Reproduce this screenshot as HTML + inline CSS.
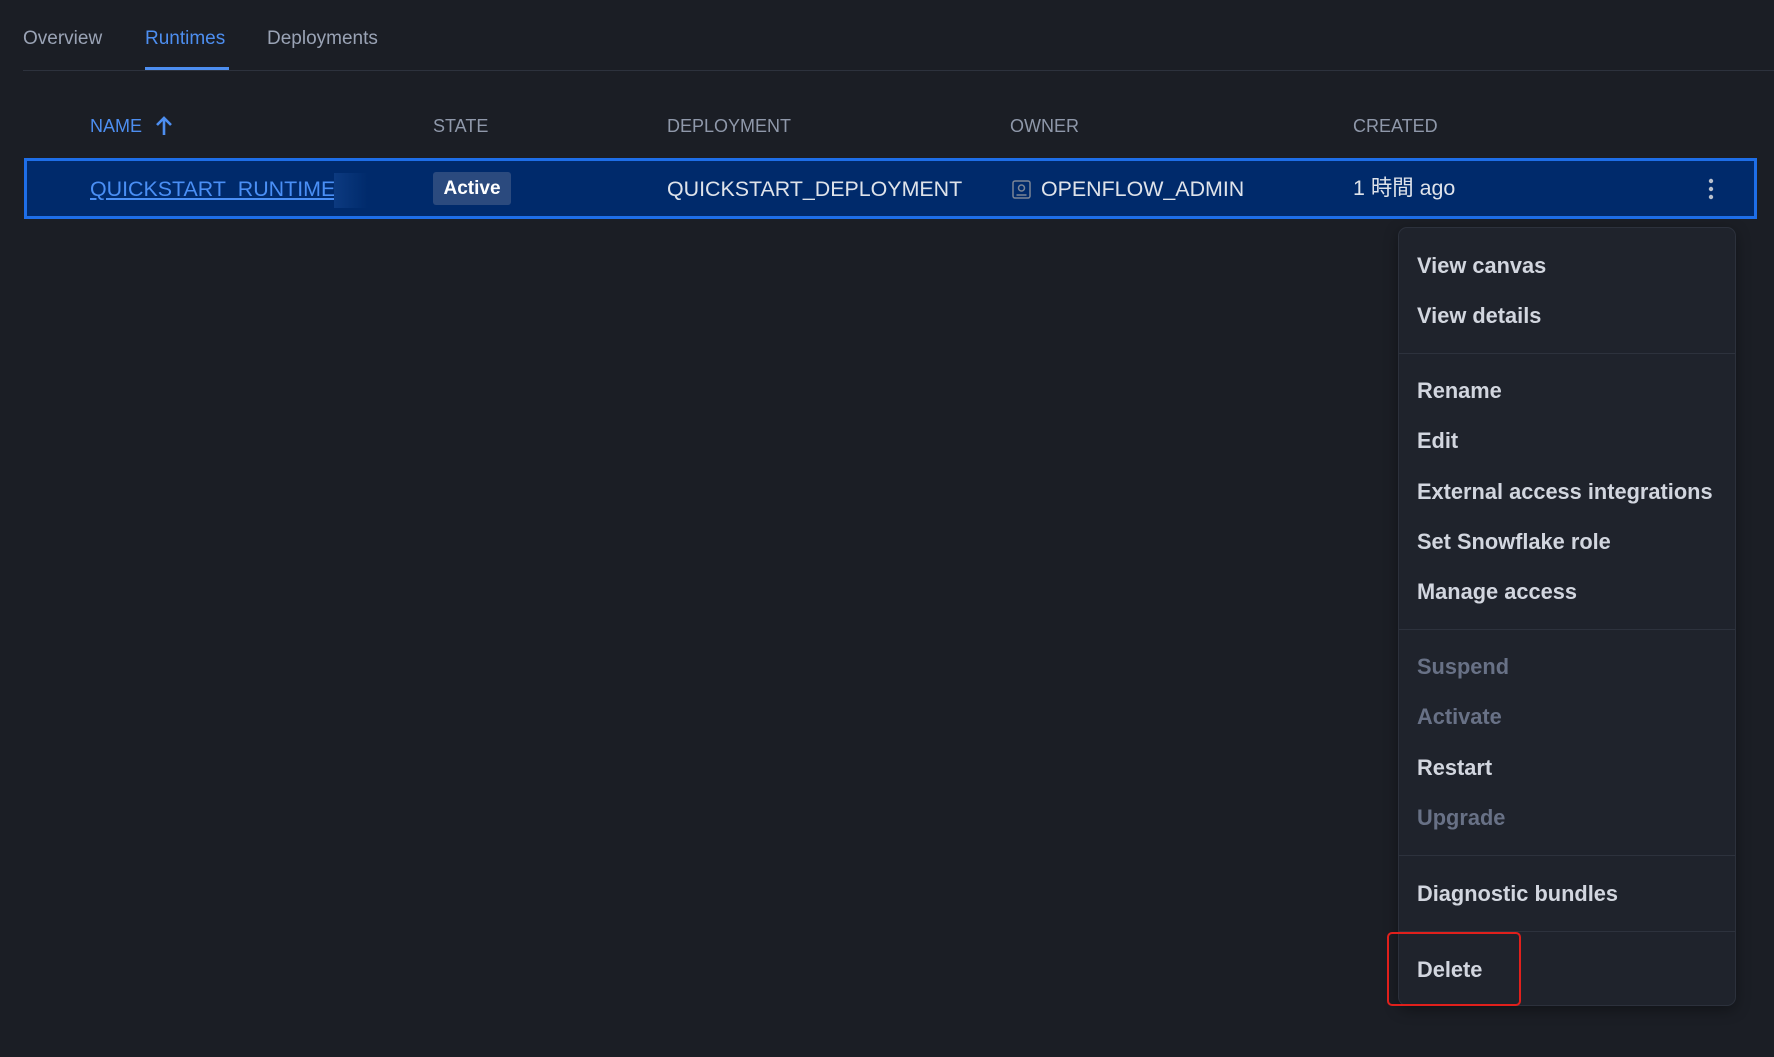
<!DOCTYPE html>
<html><head><meta charset="utf-8"><style>
*{margin:0;padding:0;box-sizing:border-box}
body{width:1774px;height:1057px;background:#1b1e25;font-family:"Liberation Sans","Noto Sans CJK JP",sans-serif;position:relative;overflow:hidden;color:#d5d9e2}
.a{position:absolute;white-space:nowrap}
.tab{font-size:19px;color:#9aa3b5;top:28px}
.hd{font-size:18px;color:#8f98aa;top:116px}
.cell{font-size:21.4px;color:#dfe3ea;top:177px;line-height:24px}
.mi{position:absolute;left:1417px;font-size:21.8px;font-weight:bold;color:#d2d6df;transform:translateY(-50%);line-height:26px}
.dis{color:#687186}
.sep{position:absolute;left:0;right:0;height:1px;background:#2d323d}
</style></head><body>
<div class="a tab" style="left:23px">Overview</div>
<div class="a tab" style="left:145px;color:#4d8ef0">Runtimes</div>
<div class="a tab" style="left:267px">Deployments</div>
<div class="a" style="left:23px;right:0;top:70px;height:1px;background:#2d323d"></div>
<div class="a" style="left:145px;width:84px;top:67px;height:3px;background:#4d8ef0"></div>

<div class="a hd" style="left:90px;color:#4d8ef0">NAME</div>
<svg class="a" style="left:155px;top:115px" width="18" height="22" viewBox="0 0 18 22"><path d="M9 20V3M2 10l7-7 7 7" stroke="#4d8ef0" stroke-width="2.6" fill="none"/></svg>
<div class="a hd" style="left:433px">STATE</div>
<div class="a hd" style="left:667px">DEPLOYMENT</div>
<div class="a hd" style="left:1010px">OWNER</div>
<div class="a hd" style="left:1353px">CREATED</div>

<div class="a" style="left:24px;top:158px;width:1733px;height:61px;background:#002a6b;border:3px solid #1e6ee8"></div>
<div class="a cell" style="left:90px;color:#4a8ff5;text-decoration:underline">QUICKSTART_RUNTIME</div>
<div class="a" style="left:334px;top:173px;width:34px;height:35px;background:linear-gradient(90deg,#0c3a80,#002a6b)"></div>
<div class="a" style="left:433px;top:172px;width:78px;height:33px;background:#2b4a7e;border-radius:3px;color:#fff;font-weight:bold;font-size:19px;text-align:center;line-height:33px">Active</div>
<div class="a cell" style="left:667px">QUICKSTART_DEPLOYMENT</div>
<svg class="a" style="left:1012px;top:180px" width="19" height="19" viewBox="0 0 19 19"><rect x="1" y="1" width="17" height="17" rx="2" stroke="#7b8596" stroke-width="1.5" fill="none"/><circle cx="9.5" cy="8" r="3" stroke="#7b8596" stroke-width="1.5" fill="none"/><path d="M4.5 15h10" stroke="#7b8596" stroke-width="1.5"/></svg>
<div class="a cell" style="left:1041px">OPENFLOW_ADMIN</div>
<div class="a cell" style="left:1353px;top:176px">1 時間 ago</div>
<svg class="a" style="left:1705px;top:178px" width="12" height="24"><circle cx="6" cy="3" r="2.2" fill="#b9c0cc"/><circle cx="6" cy="11" r="2.2" fill="#b9c0cc"/><circle cx="6" cy="19" r="2.2" fill="#b9c0cc"/></svg>

<div class="a" style="left:1398px;top:227px;width:338px;height:779px;background:#1f232c;border:1px solid #2c313c;border-radius:9px;box-shadow:0 4px 14px rgba(0,0,0,.35)">
<div class="sep" style="top:125px"></div>
<div class="sep" style="top:401px"></div>
<div class="sep" style="top:627px"></div>
<div class="sep" style="top:703px"></div>
</div>
<div class="mi" style="top:266px">View canvas</div>
<div class="mi" style="top:316px">View details</div>
<div class="mi" style="top:391px">Rename</div>
<div class="mi" style="top:441px">Edit</div>
<div class="mi" style="top:492px">External access integrations</div>
<div class="mi" style="top:542px">Set Snowflake role</div>
<div class="mi" style="top:592px">Manage access</div>
<div class="mi dis" style="top:667px">Suspend</div>
<div class="mi dis" style="top:717px">Activate</div>
<div class="mi" style="top:768px">Restart</div>
<div class="mi dis" style="top:818px">Upgrade</div>
<div class="mi" style="top:894px">Diagnostic bundles</div>
<div class="mi" style="top:970px">Delete</div>
<div class="a" style="left:1387px;top:932px;width:134px;height:74px;border:2px solid #e0201c;border-radius:5px"></div>
</body></html>
